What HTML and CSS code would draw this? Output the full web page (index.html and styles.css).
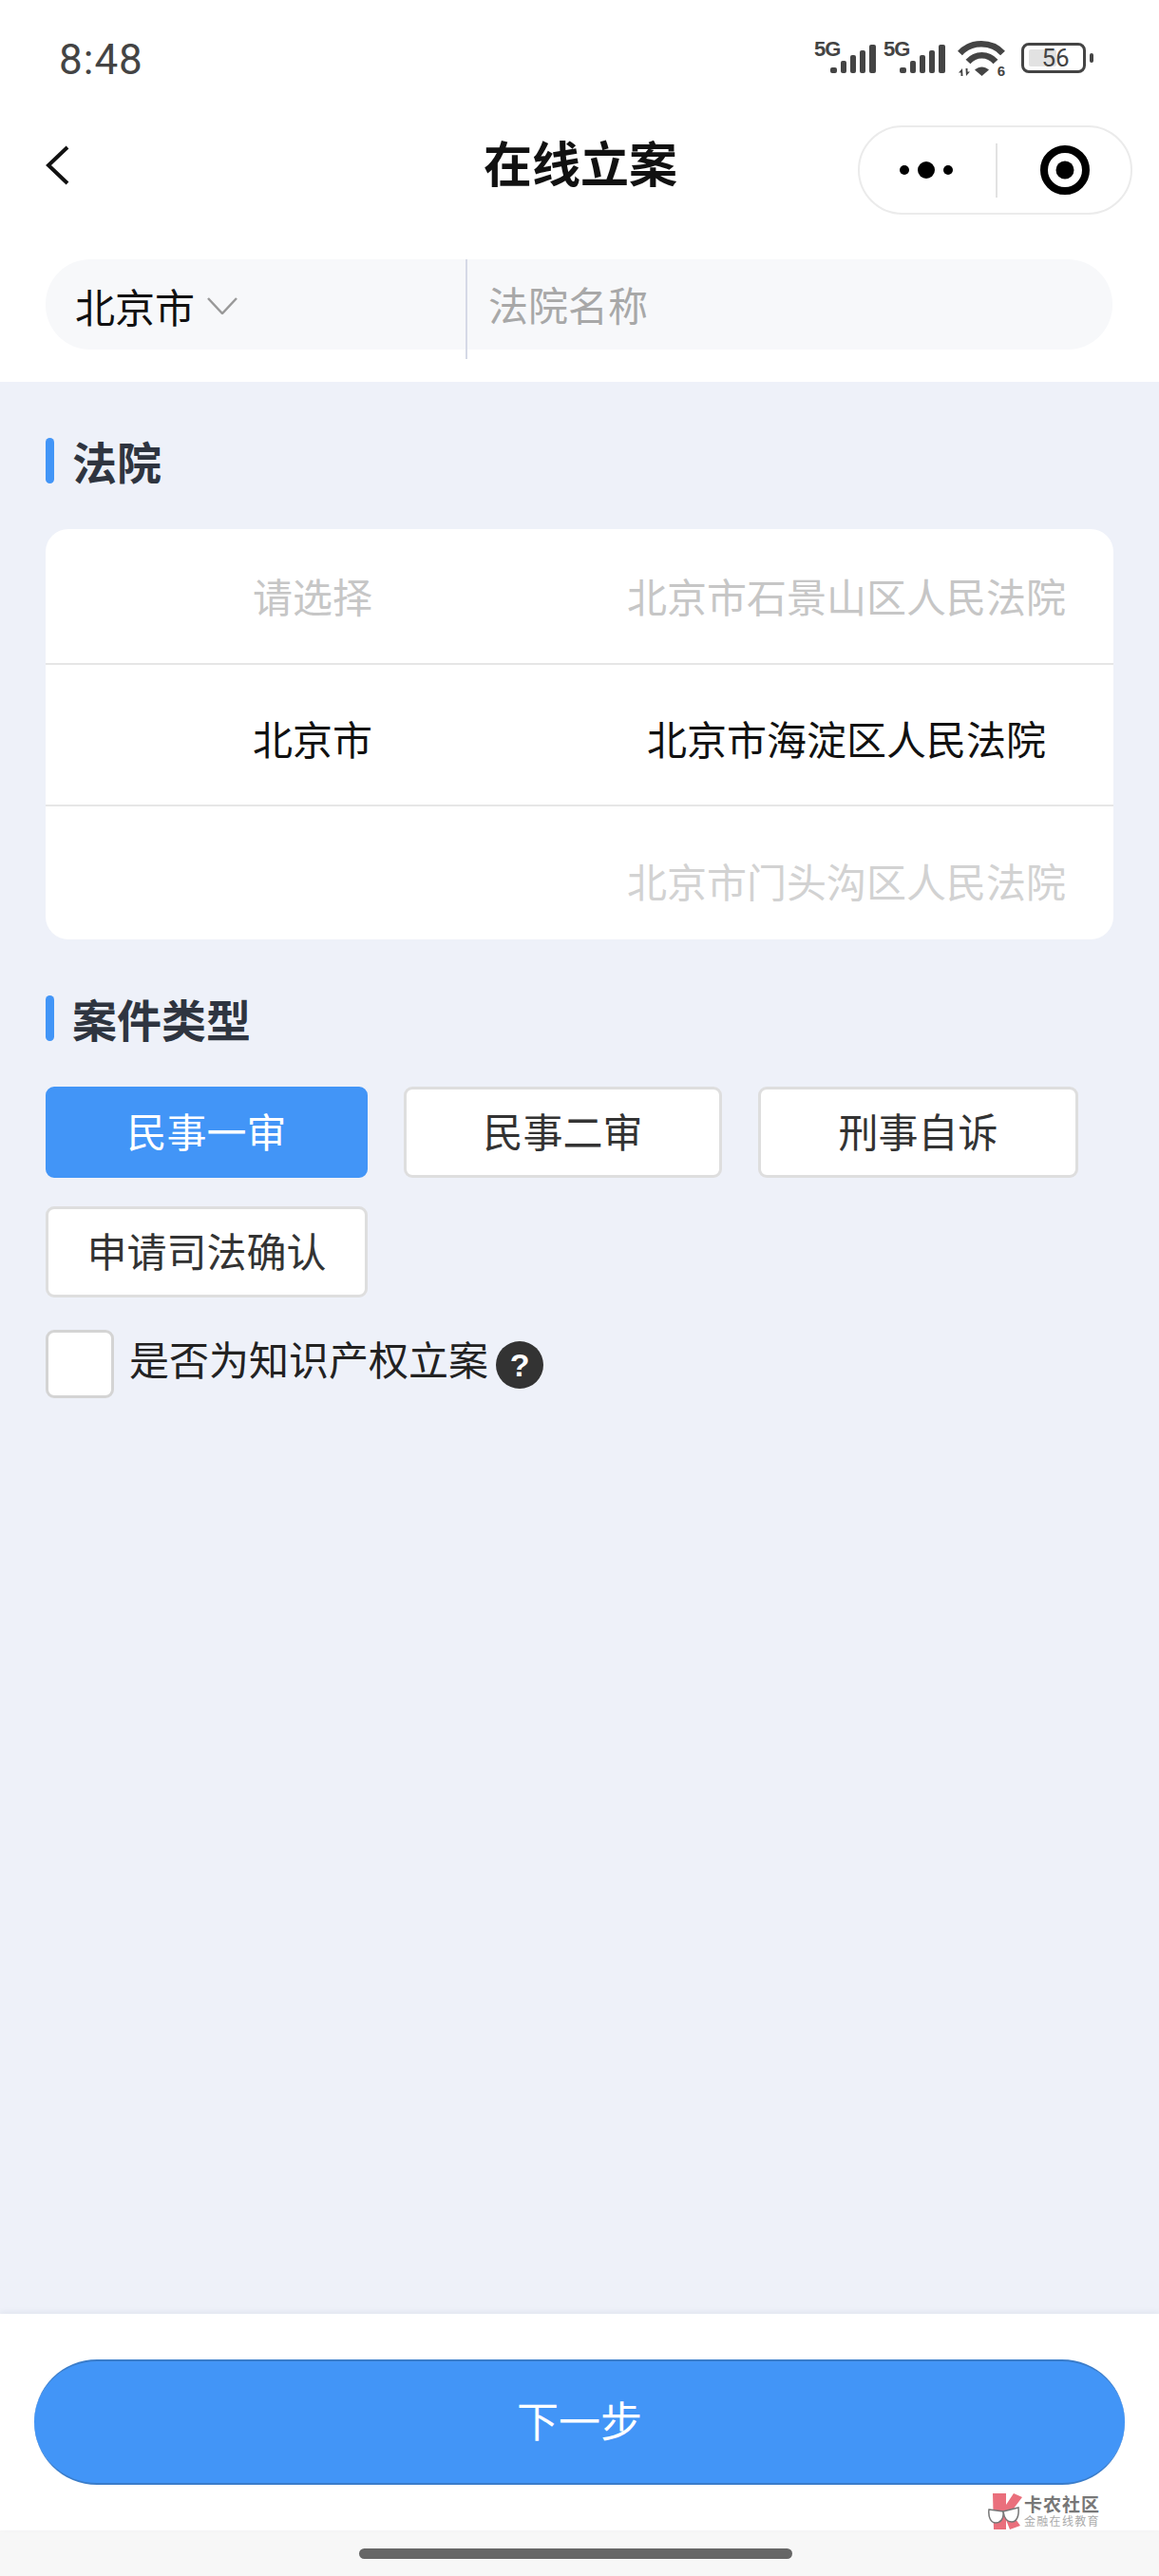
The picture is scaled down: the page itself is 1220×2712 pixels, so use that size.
FILE: index.html
```html
<!DOCTYPE html>
<html lang="zh-CN">
<head>
<meta charset="utf-8">
<title>在线立案</title>
<link rel="stylesheet" href="styles.css">
</head>
<body>
<div class="top">
  <div class="status">
    <span class="time">8:48</span>
    <div class="status-icons">
      <div class="sim">
        <span class="sim-label">5G</span>
        <svg class="bars" viewBox="0 0 48 30"><rect x="0" y="24" width="7" height="6" rx="2"/><rect x="11" y="17" width="6" height="13" rx="2"/><rect x="21" y="11" width="6" height="19" rx="2"/><rect x="31" y="6" width="6" height="24" rx="2"/><rect x="41" y="0" width="7" height="30" rx="2"/></svg>
      </div>
      <div class="sim">
        <span class="sim-label">5G</span>
        <svg class="bars" viewBox="0 0 48 30"><rect x="0" y="24" width="7" height="6" rx="2"/><rect x="11" y="17" width="6" height="13" rx="2"/><rect x="21" y="11" width="6" height="19" rx="2"/><rect x="31" y="6" width="6" height="24" rx="2"/><rect x="41" y="0" width="7" height="30" rx="2"/></svg>
      </div>
      <div class="wifi-wrap">
        <svg class="wifi" viewBox="0 0 50 37">
          <path d="M2.500 13C14 0 36 0 47.500 13" fill="none" stroke="#444" stroke-width="6.500"/>
          <path d="M11 22C19 13 32 13 40 22" fill="none" stroke="#444" stroke-width="6.500"/>
          <path d="M18 30.500C23 26.500 28 26.500 33 30.500L25.500 37Z" fill="#444"/>
          <path d="M5 29L1 33.500H3.500V37H5.500ZM9 37L13 32.500H10.500V29H8.500Z" fill="#444"/>
        </svg>
        <span class="wifi-six">6</span>
      </div>
      <div class="battery">
        <div class="battery-body">
          <div class="battery-fill"></div>
          <span class="battery-num">56</span>
        </div>
        <div class="battery-tip"></div>
      </div>
    </div>
  </div>
  <div class="nav">
    <svg class="back" viewBox="0 0 26 42"><path d="M23 2L3 21L23 40" fill="none" stroke="#111" stroke-width="4"/></svg>
    <h1 class="title">在线立案</h1>
    <div class="capsule">
      <div class="capsule-dots">
        <svg class="dots" viewBox="0 0 56 20"><circle cx="5" cy="10" r="5"/><circle cx="28" cy="10" r="9"/><circle cx="51" cy="10" r="5"/></svg>
      </div>
      <div class="capsule-line"></div>
      <div class="capsule-target">
        <svg class="target" viewBox="0 0 52 52"><circle cx="26" cy="26" r="22" fill="none" stroke="#000" stroke-width="8"/><circle cx="26" cy="26" r="9.500"/></svg>
      </div>
    </div>
  </div>
  <div class="search">
    <div class="city">
      <span>北京市</span>
      <svg class="city-arrow" viewBox="0 0 32 18"><path d="M1 1L16 17L31 1" fill="none" stroke="#999" stroke-width="2.500"/></svg>
    </div>
    <div class="search-line"></div>
    <div class="court-input">法院名称</div>
  </div>
</div>

<main class="main">
  <div class="head"><i class="head-bar"></i><h2 class="head-text">法院</h2></div>
  <div class="picker">
    <div class="picker-line"></div>
    <div class="cell far">请选择</div><div class="cell far">北京市石景山区人民法院</div>
    <div class="cell now">北京市</div><div class="cell now">北京市海淀区人民法院</div>
    <div class="cell"></div><div class="cell faint">北京市门头沟区人民法院</div>
  </div>
  <div class="head head-case"><i class="head-bar"></i><h2 class="head-text">案件类型</h2></div>
  <div class="types">
    <div class="type on">民事一审</div>
    <div class="type">民事二审</div>
    <div class="type">刑事自诉</div>
    <div class="type">申请司法确认</div>
  </div>
  <div class="ip">
    <div class="check"></div>
    <span class="ip-text">是否为知识产权立案</span>
    <span class="help">?</span>
  </div>
</main>

<footer class="footer">
  <div class="next">下一步</div>
  <div class="mark">
    <svg class="mark-logo" viewBox="0 0 36 38">
      <path d="M5 0H19V38H6Z" fill="#ea6f7c"/>
      <path d="M19 12L27 0L36 4L24 20L34 34L23 38L19 28Z" fill="#ea6f7c"/>
      <path d="M1 17L16 19C17 27 13 31 8 31C3 31 0 25 1 17Z" fill="#fff" stroke="#777" stroke-width="1.500"/>
      <path d="M16 19L32 15C33 24 30 30 25 30C20 30 17 26 16 19Z" fill="#fff" stroke="#777" stroke-width="1.500"/>
    </svg>
    <div class="mark-text">
      <b class="mark-name">卡农社区</b>
      <span class="mark-sub">金融在线教育</span>
    </div>
  </div>
</footer>
<div class="home"><div class="home-bar"></div></div>
</body>
</html>
```
FILE: styles.css
```css
* { box-sizing: border-box; margin: 0; padding: 0; }
html, body { width: 1220px; height: 2712px; }
body {
  display: flex;
  flex-direction: column;
  font-family: "Noto Sans CJK SC", "Noto Sans", sans-serif;
  font-size: 42px;
  background: #fff;
  color: #000;
  overflow: hidden;
}

/* top */
.top { background: #fff; padding-bottom: 34px; }
.status {
  height: 132px;
  display: flex;
  justify-content: space-between;
  align-items: flex-start;
  padding: 0 69px 0 62px;
}
.time {
  font-family: Roboto, sans-serif;
  font-size: 44px;
  line-height: 44px;
  margin-top: 41px;
  color: #444;
  letter-spacing: 1px;
}
.status-icons { display: flex; align-items: flex-start; margin-top: 43px; }
.sim { position: relative; width: 65px; height: 34px; margin-right: 8px; }
.sim-label {
  position: absolute;
  left: 0;
  top: 0;
  font-family: "Liberation Sans", sans-serif;
  font-weight: 700;
  font-size: 22px;
  line-height: 18px;
  letter-spacing: -1px;
  color: #444;
}
.bars { position: absolute; left: 17px; top: 4px; width: 48px; height: 30px; fill: #444; }
.wifi-wrap { position: relative; width: 50px; height: 37px; margin: 0 17px 0 5px; }
.wifi { display: block; width: 50px; height: 37px; }
.wifi-six {
  position: absolute;
  right: 0;
  bottom: -2px;
  font-family: "Liberation Sans", sans-serif;
  font-weight: 700;
  font-size: 15px;
  line-height: 15px;
  color: #444;
}
.battery { display: flex; align-items: center; margin-top: 2px; }
.battery-body {
  position: relative;
  width: 68px;
  height: 32px;
  border: 3px solid #444;
  border-radius: 8px;
  display: flex;
  align-items: center;
  justify-content: center;
  padding-left: 4px;
}
.battery-fill {
  position: absolute;
  left: 5px;
  top: 4px;
  bottom: 4px;
  width: 29px;
  background: #e2e2e2;
  border-radius: 2px;
}
.battery-num {
  position: relative;
  font-family: Roboto, sans-serif;
  font-size: 26px;
  line-height: 26px;
  color: #444;
}
.battery-tip { width: 4px; height: 10px; margin-left: 4px; background: #444; border-radius: 2px; }

.nav {
  height: 94px;
  display: grid;
  grid-template-columns: minmax(0, 1fr) auto minmax(0, 1fr);
  align-items: center;
  padding: 0 28px 0 48px;
}
.back { width: 26px; height: 42px; margin-top: -10px; }
.title { font-size: 51px; line-height: 60px; font-weight: 700; color: #111; margin-top: -19px; padding-right: 18px; }
.capsule {
  justify-self: end;
  width: 289px;
  height: 94px;
  border: 2px solid #ebebeb;
  border-radius: 47px;
  display: flex;
  align-items: center;
}
.capsule-dots { width: 143px; padding-left: 42px; }
.dots { width: 56px; height: 20px; display: block; fill: #000; }
.capsule-line { width: 2px; height: 57px; background: #e2e2e2; }
.capsule-target { flex: 1; display: flex; justify-content: center; padding-left: 2px; }
.target { width: 52px; height: 52px; display: block; }

.search {
  margin: 47px 49px 0 48px;
  height: 95px;
  background: #f7f8fa;
  border-radius: 47px;
  display: flex;
  align-items: flex-start;
}
.city {
  width: 442px;
  height: 95px;
  display: flex;
  align-items: center;
  padding: 2px 0 0 31px;
  color: #111;
}
.city-arrow { width: 32px; height: 18px; margin-left: 13px; }
.search-line { width: 2px; height: 105px; background: #d5d9e6; flex: none; }
.court-input { padding: 0 0 0 22px; line-height: 95px; color: #a8a8a8; margin-top: -1px; }

/* main */
.main { flex: 1; background: #eef1f9; padding: 59px 48px 0; }
.head { display: flex; align-items: center; height: 48px; }
.head-case { margin-top: 59px; }
.head-bar { width: 9px; height: 48px; border-radius: 5px; background: #4295f7; }
.head-text { font-size: 47px; line-height: 48px; font-weight: 700; color: #2f3540; margin-left: 19px; }

.picker {
  position: relative;
  margin-top: 48px;
  height: 432px;
  background: #fff;
  border-radius: 24px;
  overflow: hidden;
  display: grid;
  grid-template-columns: 1fr 1fr;
  grid-template-rows: 150px 150px 150px;
  align-content: start;
}
.picker-line {
  position: absolute;
  left: 0;
  right: 0;
  top: 141px;
  height: 151px;
  border-top: 2px solid #e6e6e6;
  border-bottom: 2px solid #e6e6e6;
}
.cell { display: flex; align-items: center; justify-content: center; margin-top: -12px; }
.far { color: #c6c6c6; }
.now { color: #111; }
.faint { color: #d2d2d2; }

.types {
  margin-top: 48px;
  display: grid;
  grid-template-columns: 339px 335px 337px;
  column-gap: 38px;
  row-gap: 30px;
}
.type {
  height: 96px;
  display: flex;
  align-items: center;
  justify-content: center;
  padding-bottom: 6px;
  background: #fff;
  border: 3px solid #dedede;
  border-radius: 9px;
  color: #333;
}
.type.on { background: #4295f7; border-color: #4295f7; color: #fff; }

.ip { margin-top: 34px; display: flex; align-items: center; }
.check {
  width: 72px;
  height: 72px;
  background: #fff;
  border: 3px solid #d4d4d4;
  border-radius: 9px;
}
.ip-text { margin-left: 16px; color: #222; line-height: 60px; margin-top: -12px; }
.help {
  width: 50px;
  height: 50px;
  margin: 2px 0 0 8px;
  border-radius: 50%;
  background: #333;
  color: #fff;
  font-family: "Liberation Sans", sans-serif;
  font-weight: 700;
  font-size: 34px;
  line-height: 50px;
  text-align: center;
}

/* footer */
.footer {
  position: relative;
  height: 228px;
  background: #fff;
  padding: 48px 36px 0;
  box-shadow: 0 -2px 6px rgba(40, 50, 90, .06);
}
.next {
  height: 132px;
  border-top: 2px solid #3a7cc9;
  border-bottom: 2px solid #3a7cc9;
  border-radius: 66px;
  background: #4295f7;
  color: #fff;
  font-size: 44px;
  padding-bottom: 6px;
  display: flex;
  align-items: center;
  justify-content: center;
}
.mark { position: absolute; left: 1040px; top: 189px; display: flex; }
.mark-logo { width: 36px; height: 38px; }
.mark-text { display: flex; flex-direction: column; margin-left: 2px; }
.mark-name { font-size: 19px; line-height: 21px; color: #777; letter-spacing: 1px; white-space: nowrap; }
.mark-sub { font-size: 12px; line-height: 15px; color: #aaa; letter-spacing: 1.300px; white-space: nowrap; }

.home { height: 48px; background: #f7f7f7; padding-top: 19px; display: flex; justify-content: center; }
.home-bar { width: 456px; height: 11px; background: #666; border-radius: 6px; margin-right: 8px; }
```
